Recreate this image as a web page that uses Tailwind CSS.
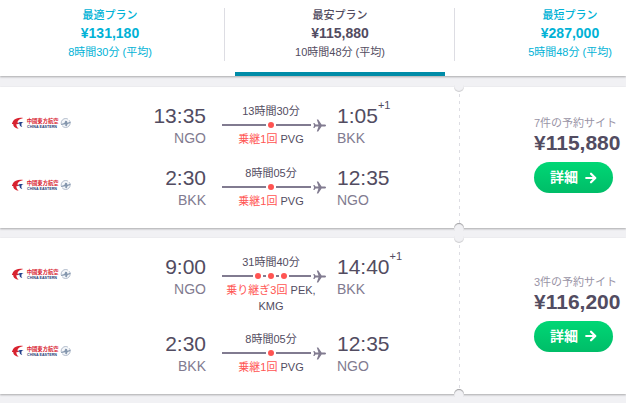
<!DOCTYPE html>
<html lang="ja">
  <head>
    <meta charset="UTF-8" />
    <meta name="viewport" content="width=device-width, initial-scale=1.0" />
    <title>フライト検索結果</title>
    <script src="https://cdn.jsdelivr.net/npm/@tailwindcss/browser@4"></script>
  </head>
  <body
    class="min-h-screen overflow-x-hidden bg-[#f1f1f4] font-['Liberation_Sans','Noto_Sans_CJK_JP',sans-serif] text-[11px] text-[#524c61]"
  >
    <!-- Shared icons -->
    <svg class="hidden" aria-hidden="true">
      <symbol id="logo" viewBox="0 0 180 36">
        <path d="M34 3C22 0 7 4 3 13c-2 6-4 7-5 8 2 0 4 0 6 1-1 5 6 12 16 13-6-5-8-10-6-14 3 1 6 0 8-2-3 0-5-1-6-3 2-7 8-11 18-13z" fill="#d8222f" />
        <path d="M35 16c-7-2-14-1-18 3 2 1 4 1 6 1-1 4 1 8 8 10-3-4-4-7-2-9-2-2 1-4 6-5z" fill="#24418b" />
        <text x="44" y="18" font-size="16" font-weight="700" fill="#d8222f">中國東方航空</text>
        <text x="45" y="33" font-size="11" font-weight="700" fill="#273b78">CHINA EASTERN</text>
        <circle cx="161" cy="18" r="13.5" fill="#f4f6f9" stroke="#a3b0c2" stroke-width="2.5" stroke-dasharray="32 5" />
        <path d="M147 21l10-3 3-7 5 1 1 5 10-3-1 4-8 3-3 7-4-1v-5l-12 2z" fill="#8496ad" />
      </symbol>
      <symbol id="plane" viewBox="0 0 13 13">
        <path d="M13 6.5c0-.6-.7-1-1.6-1H8.6L5.2.6H3.8l1.7 4.9H2.6L1.4 4H.3l.8 2.5L.3 9h1.1l1.2-1.5h2.9l-1.7 4.9h1.4l3.4-4.9h2.8c.9 0 1.6-.4 1.6-1z" fill="#817b90" />
      </symbol>
      <symbol id="arrow" viewBox="0 0 12 12">
        <path d="M1.2 6H10M6 1.7L10.3 6 6 10.3" fill="none" stroke="#fff" stroke-width="2.2" stroke-linecap="round" stroke-linejoin="round" />
      </symbol>
    </svg>

    <!-- Plan tabs -->
    <header class="relative bg-white shadow-[0_1px_2px_rgba(0,0,0,0.3)]">
      <nav class="-ml-[5px] flex overflow-hidden">
        <button class="relative h-[76px] w-[230px] shrink-0 pb-[9px] text-[#00b2d6]">
          <span class="block font-medium leading-4">最適プラン</span>
          <span class="block text-[14px] font-bold leading-5">¥131,180</span>
          <span class="block leading-[18px]">8時間30分 (平均)</span>
          <span class="absolute top-2 right-0 h-[53px] w-px bg-[#dddde3]"></span>
        </button>
        <button class="relative h-[76px] w-[230px] shrink-0 pb-[9px]">
          <span class="block font-medium leading-4">最安プラン</span>
          <span class="block text-[14px] font-bold leading-5">¥115,880</span>
          <span class="block leading-[18px]">10時間48分 (平均)</span>
          <span class="absolute top-2 right-0 h-[53px] w-px bg-[#dddde3]"></span>
          <span class="absolute inset-x-[10px] bottom-0 h-1 bg-[#008ca8]"></span>
        </button>
        <button class="relative h-[76px] w-[230px] shrink-0 pb-[9px] text-[#00b2d6]">
          <span class="block font-medium leading-4">最短プラン</span>
          <span class="block text-[14px] font-bold leading-5">¥287,000</span>
          <span class="block leading-[18px]">5時間48分 (平均)</span>
        </button>
      </nav>
    </header>

    <main class="flex flex-col gap-[10px] pt-[11px]">
      <!-- Ticket 1 -->
      <article class="flex bg-white shadow-[0_1px_2px_rgba(0,0,0,0.3)]">
        <div class="flex flex-1 flex-col gap-[17px] pt-4 pb-[18px] pl-3">
          <section class="grid grid-cols-[60px_150fr_98px_139fr]">
            <svg class="mt-[14px] h-3 w-[60px]" role="img" aria-label="China Eastern"><use href="#logo" /></svg>
            <div class="pr-4 text-right">
              <p class="text-[21px] leading-[25px]">13:35</p>
              <p class="text-[14px] leading-5 text-[#817b90]">NGO</p>
            </div>
            <div class="text-center">
              <p class="leading-4">13時間30分</p>
              <div class="relative flex h-3 items-center gap-[2px]">
                <span class="h-[2px] flex-1 bg-[#817b90]"></span>
                <span class="size-[6px] rounded-full bg-[#ff5452]"></span>
                <span class="flex-1"><span class="mr-[9px] block h-[2px] bg-[#817b90]"></span></span>
                <svg class="absolute -right-[6px] size-[13px]"><use href="#plane" /></svg>
              </div>
              <p class="leading-4"><span class="text-[#ff5452]">乗継1回</span> PVG</p>
            </div>
            <div class="pl-[17px]">
              <p class="flex text-[21px] leading-[25px]">1:05<span class="-mt-1 text-[11px] leading-3">+1</span></p>
              <p class="text-[14px] leading-5 text-[#817b90]">BKK</p>
            </div>
          </section>
          <section class="grid grid-cols-[60px_150fr_98px_139fr]">
            <svg class="mt-[14px] h-3 w-[60px]" role="img" aria-label="China Eastern"><use href="#logo" /></svg>
            <div class="pr-4 text-right">
              <p class="text-[21px] leading-[25px]">2:30</p>
              <p class="text-[14px] leading-5 text-[#817b90]">BKK</p>
            </div>
            <div class="text-center">
              <p class="leading-4">8時間05分</p>
              <div class="relative flex h-3 items-center gap-[2px]">
                <span class="h-[2px] flex-1 bg-[#817b90]"></span>
                <span class="size-[6px] rounded-full bg-[#ff5452]"></span>
                <span class="flex-1"><span class="mr-[9px] block h-[2px] bg-[#817b90]"></span></span>
                <svg class="absolute -right-[6px] size-[13px]"><use href="#plane" /></svg>
              </div>
              <p class="leading-4"><span class="text-[#ff5452]">乗継1回</span> PVG</p>
            </div>
            <div class="pl-[17px]">
              <p class="text-[21px] leading-[25px]">12:35</p>
              <p class="text-[14px] leading-5 text-[#817b90]">NGO</p>
            </div>
          </section>
        </div>
        <div class="relative flex w-[167px] flex-col items-start justify-center bg-[repeating-linear-gradient(to_bottom,#dddde3_0_3px,transparent_3px_7px)] bg-[length:1px_100%] bg-no-repeat pb-[7px] pl-[75px]">
          <span class="absolute -top-[2px] -left-[5px] h-[7px] w-[10px] rounded-b-full bg-[#f1f1f4] shadow-[inset_0_-1px_1px_rgba(0,0,0,0.15)]"></span>
          <span class="absolute -bottom-[3px] -left-[5px] h-2 w-[10px] rounded-t-full bg-[#f1f1f4] shadow-[inset_0_1px_1px_rgba(0,0,0,0.35)]"></span>
          <p class="leading-4 whitespace-nowrap text-[#9994a6]">7件の予約サイト</p>
          <p class="text-[21px] font-bold leading-6">¥115,880</p>
          <button class="mt-[7px] flex h-[31px] items-center gap-[7px] rounded-full bg-linear-to-b from-[#00d775] to-[#00bd68] px-4 text-[14px] font-bold whitespace-nowrap text-white">
            詳細 <svg class="size-3"><use href="#arrow" /></svg>
          </button>
        </div>
      </article>

      <!-- Ticket 2 -->
      <article class="flex bg-white shadow-[0_1px_2px_rgba(0,0,0,0.3)]">
        <div class="flex flex-1 flex-col gap-[17px] pt-4 pb-[18px] pl-3">
          <section class="grid grid-cols-[60px_150fr_98px_139fr]">
            <svg class="mt-[14px] h-3 w-[60px]" role="img" aria-label="China Eastern"><use href="#logo" /></svg>
            <div class="pr-4 text-right">
              <p class="text-[21px] leading-[25px]">9:00</p>
              <p class="text-[14px] leading-5 text-[#817b90]">NGO</p>
            </div>
            <div class="text-center">
              <p class="leading-4">31時間40分</p>
              <div class="relative flex h-3 items-center gap-[2px]">
                <span class="h-[2px] flex-1 bg-[#817b90]"></span>
                <span class="size-[6px] rounded-full bg-[#ff5452]"></span>
                <span class="h-[2px] w-[3px] bg-[#817b90]"></span>
                <span class="size-[6px] rounded-full bg-[#ff5452]"></span>
                <span class="h-[2px] w-[3px] bg-[#817b90]"></span>
                <span class="size-[6px] rounded-full bg-[#ff5452]"></span>
                <span class="flex-1"><span class="mr-[9px] block h-[2px] bg-[#817b90]"></span></span>
                <svg class="absolute -right-[6px] size-[13px]"><use href="#plane" /></svg>
              </div>
              <p class="leading-4"><span class="text-[#ff5452]">乗り継ぎ3回</span> <span>PEK,</span> <span>KMG</span></p>
            </div>
            <div class="pl-[17px]">
              <p class="flex text-[21px] leading-[25px]">14:40<span class="-mt-1 text-[11px] leading-3">+1</span></p>
              <p class="text-[14px] leading-5 text-[#817b90]">BKK</p>
            </div>
          </section>
          <section class="grid grid-cols-[60px_150fr_98px_139fr]">
            <svg class="mt-[14px] h-3 w-[60px]" role="img" aria-label="China Eastern"><use href="#logo" /></svg>
            <div class="pr-4 text-right">
              <p class="text-[21px] leading-[25px]">2:30</p>
              <p class="text-[14px] leading-5 text-[#817b90]">BKK</p>
            </div>
            <div class="text-center">
              <p class="leading-4">8時間05分</p>
              <div class="relative flex h-3 items-center gap-[2px]">
                <span class="h-[2px] flex-1 bg-[#817b90]"></span>
                <span class="size-[6px] rounded-full bg-[#ff5452]"></span>
                <span class="flex-1"><span class="mr-[9px] block h-[2px] bg-[#817b90]"></span></span>
                <svg class="absolute -right-[6px] size-[13px]"><use href="#plane" /></svg>
              </div>
              <p class="leading-4"><span class="text-[#ff5452]">乗継1回</span> PVG</p>
            </div>
            <div class="pl-[17px]">
              <p class="text-[21px] leading-[25px]">12:35</p>
              <p class="text-[14px] leading-5 text-[#817b90]">NGO</p>
            </div>
          </section>
        </div>
        <div class="relative flex w-[167px] flex-col items-start justify-center bg-[repeating-linear-gradient(to_bottom,#dddde3_0_3px,transparent_3px_7px)] bg-[length:1px_100%] bg-no-repeat pb-[7px] pl-[75px]">
          <span class="absolute -top-[2px] -left-[5px] h-[7px] w-[10px] rounded-b-full bg-[#f1f1f4] shadow-[inset_0_-1px_1px_rgba(0,0,0,0.15)]"></span>
          <span class="absolute -bottom-[3px] -left-[5px] h-2 w-[10px] rounded-t-full bg-[#f1f1f4] shadow-[inset_0_1px_1px_rgba(0,0,0,0.35)]"></span>
          <p class="leading-4 whitespace-nowrap text-[#9994a6]">3件の予約サイト</p>
          <p class="text-[21px] font-bold leading-6">¥116,200</p>
          <button class="mt-[7px] flex h-[31px] items-center gap-[7px] rounded-full bg-linear-to-b from-[#00d775] to-[#00bd68] px-4 text-[14px] font-bold whitespace-nowrap text-white">
            詳細 <svg class="size-3"><use href="#arrow" /></svg>
          </button>
        </div>
      </article>
    </main>
  </body>
</html>
